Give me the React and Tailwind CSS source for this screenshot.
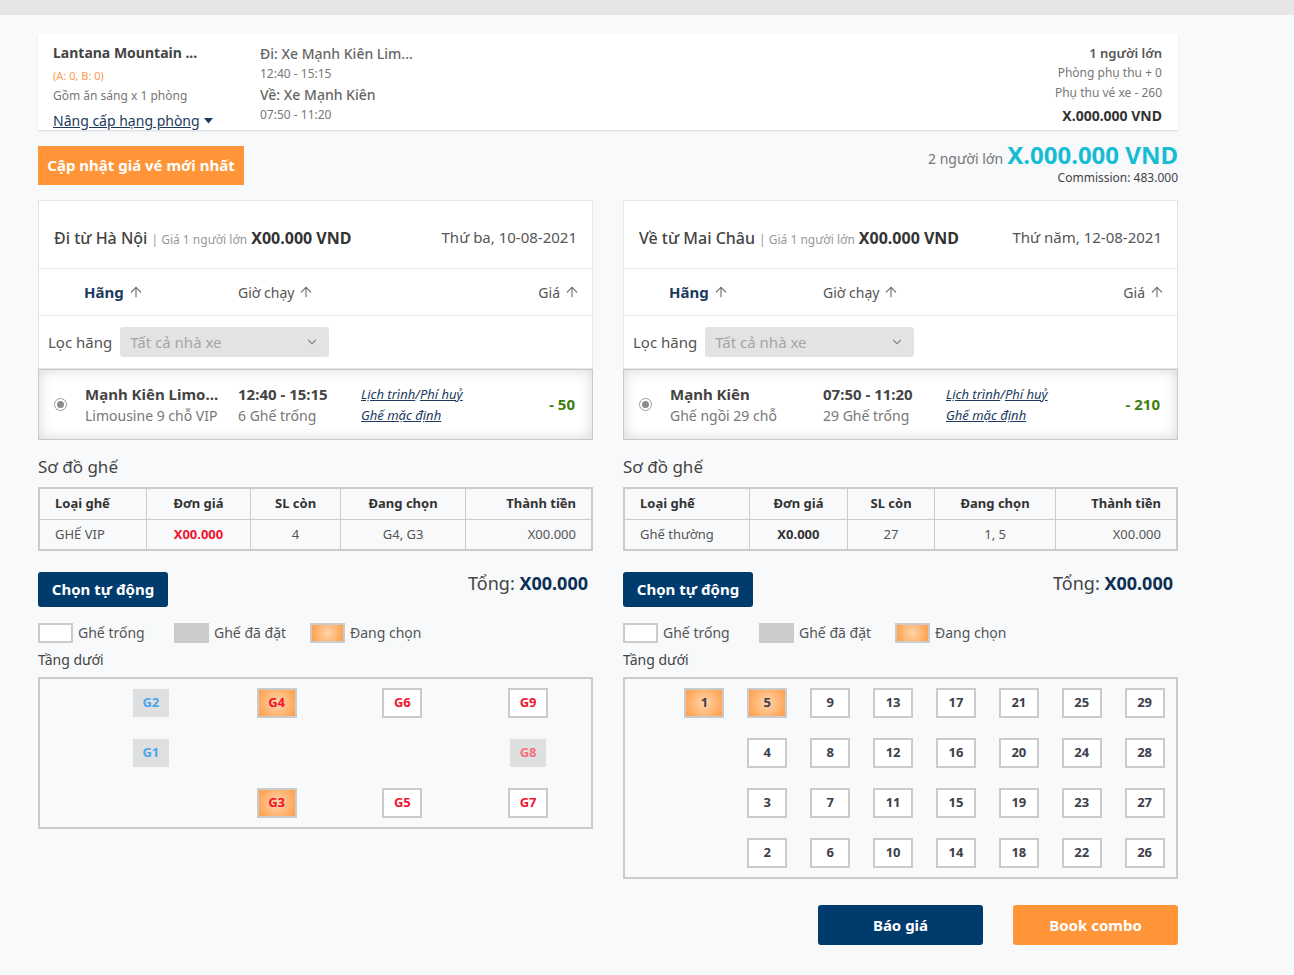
import { ArrowUp, ChevronDown } from 'lucide-react';

const leftSeats = [
  [{ l: 'G2', k: 'booked' }, { l: 'G4', k: 'selected' }, { l: 'G6', k: 'free' }, { l: 'G9', k: 'free' }],
  [{ l: 'G1', k: 'booked' }, null, null, { l: 'G8', k: 'booked', pink: true }],
  [null, { l: 'G3', k: 'selected' }, { l: 'G5', k: 'free' }, { l: 'G7', k: 'free' }],
];

const rightSeats = [
  ['1', '5', '9', '13', '17', '21', '25', '29'],
  [null, '4', '8', '12', '16', '20', '24', '28'],
  [null, '3', '7', '11', '15', '19', '23', '27'],
  [null, '2', '6', '10', '14', '18', '22', '26'],
];
const rightSelected = ['1', '5'];

const Seat = ({ seat, red }) => {
  if (!seat) return <div className="h-[30px]" />;
  if (seat.k === 'booked') {
    return (
      <div className={seat.pink
        ? 'w-[36px] h-[28px] bg-[#dedfdf] flex items-center justify-center text-[13px] font-bold text-[#f47281]'
        : 'w-[36px] h-[28px] bg-[#dedfdf] flex items-center justify-center text-[13px] font-bold text-[#4aa6f0]'}>
        {seat.l}
      </div>
    );
  }
  const base = seat.k === 'selected'
    ? 'w-[40px] h-[30px] border-2 border-[#cbcbcb] bg-[radial-gradient(circle,#ffd4aa_0%,#ff9d47_100%)] flex items-center justify-center text-[13px] font-bold'
    : 'w-[40px] h-[30px] border-2 border-[#cbcbcb] bg-white flex items-center justify-center text-[13px] font-bold';
  return <div className={base + (red ? ' text-[#f0142f]' : ' text-[#3e3f4c]')}>{seat.l}</div>;
};

const SortHead = ({ label, active }) => (
  <span className={active ? 'flex items-center gap-[4px] font-bold text-[#1b3a5e]' : 'flex items-center gap-[4px] text-[#555]'}>
    {label}
    <ArrowUp size={16} strokeWidth={1.8} className="text-[#777]" />
  </span>
);

const Legend = () => (
  <div className="flex items-center mt-[15px] text-[14px] text-[#555]">
    <div className="w-[136px] flex items-center gap-[5px]">
      <span className="w-[35px] h-[20px] border-2 border-[#cbcbcb] bg-white" />
      Ghế trống
    </div>
    <div className="w-[136px] flex items-center gap-[5px]">
      <span className="w-[35px] h-[20px] bg-[#cbcbcb]" />
      Ghế đã đặt
    </div>
    <div className="flex items-center gap-[5px]">
      <span className="w-[35px] h-[20px] border-2 border-[#cbcbcb] bg-[radial-gradient(circle,#ffd4aa_0%,#ff9d47_100%)]" />
      Đang chọn
    </div>
  </div>
);

const TripColumn = ({ d }) => (
  <div className="w-[555px]">
    <div className="bg-white border border-[#e6e6e6]">
      {/* header */}
      <div className="h-[68px] pt-[6px] px-[15px] flex items-center justify-between border-b border-[#e6e6e6]">
        <div className="flex items-baseline text-[16px] text-[#444]">
          <span className="font-medium">{d.from}</span>
          <span className="text-[12px] text-[#999] mx-[4px]">| Giá 1 người lớn</span>
          <span className="font-bold text-[#333]">X00.000 VND</span>
        </div>
        <span className="text-[15px] text-[#555]">{d.date}</span>
      </div>
      {/* sort */}
      <div className="h-[47px] flex items-center text-[14px] border-b border-[#e6e6e6] pr-[12px]">
        <div className="w-[199px] pl-[45px] text-[15px]"><SortHead label="Hãng" active /></div>
        <div className="flex-1"><SortHead label="Giờ chạy" /></div>
        <SortHead label="Giá" />
      </div>
      {/* filter */}
      <div className="h-[52px] flex items-center pl-[9px]">
        <span className="text-[15px] text-[#555] mr-[8px]">Lọc hãng</span>
        <div className="w-[209px] h-[30px] bg-[#e3e3e3] rounded-[3px] flex items-center justify-between px-[10px] text-[15px] text-[#a5a5a5]">
          Tất cả nhà xe
          <ChevronDown size={14} strokeWidth={2} className="text-[#888]" />
        </div>
      </div>
    </div>
    {/* trip */}
    <div className="h-[71px] border border-[#c9c9c9] bg-white shadow-[inset_0_0_14px_rgba(0,0,0,0.16)] flex items-center pl-[15px] pr-[17px]">
      <span className="w-[13px] h-[13px] rounded-full border border-[#9a9a9a] bg-white flex items-center justify-center">
        <span className="w-[7px] h-[7px] rounded-full bg-[#8c8c8c]" />
      </span>
      <div className="w-[153px] ml-[18px] leading-[22px]">
        <div className="text-[15px] font-bold text-[#444] whitespace-nowrap">{d.bus}</div>
        <div className="text-[14px] text-[#777] whitespace-nowrap">{d.busType}</div>
      </div>
      <div className="w-[123px] leading-[22px]">
        <div className="text-[15px] font-bold text-[#444]">{d.time}</div>
        <div className="text-[14px] text-[#777]">{d.empty}</div>
      </div>
      <div className="flex-1 text-[13px] italic text-[#1b3a5e] leading-[21px]">
        <div><span className="underline">Lịch trình</span>/<span className="underline">Phí huỷ</span></div>
        <div className="underline">Ghế mặc định</div>
      </div>
      <span className="text-[15px] font-bold text-[#3f7d0e]">{d.price}</span>
    </div>

    <div className="mt-[15px] text-[17px] leading-[24px] text-[#444]">Sơ đồ ghế</div>

    <table className="mt-[8px] w-full border-collapse border-2 border-[#cbcbcb] text-[13px] text-[#555]">
      <thead>
        <tr className="h-[31px] text-[#333]">
          {d.cols.map((c, i) => (
            <th key={c} style={{ width: d.widths[i] }}
              className={i === 0 ? 'border border-[#cbcbcb] font-bold text-left pl-[15px]' : i === 4 ? 'border border-[#cbcbcb] font-bold text-right pr-[15px]' : 'border border-[#cbcbcb] font-bold text-center'}>
              {c}
            </th>
          ))}
        </tr>
      </thead>
      <tbody>
        <tr className="h-[31px]">
          <td className="border border-[#cbcbcb] text-left pl-[15px]">{d.seatType}</td>
          <td className={d.redPrice ? 'border border-[#cbcbcb] text-center font-bold text-[#f0142f]' : 'border border-[#cbcbcb] text-center font-bold text-[#333]'}>{d.unit}</td>
          <td className="border border-[#cbcbcb] text-center">{d.left}</td>
          <td className="border border-[#cbcbcb] text-center">{d.picked}</td>
          <td className="border border-[#cbcbcb] text-right pr-[15px]">X00.000</td>
        </tr>
      </tbody>
    </table>

    <div className="mt-[21px] flex items-start justify-between">
      <button className="h-[35px] w-[130px] bg-[#003b6e] rounded-[3px] text-white text-[15px] font-bold">Chọn tự động</button>
      <div className="text-[18px] text-[#444] leading-[22px] pr-[5px]">
        Tổng: <span className="font-bold text-[#0d2f55]">X00.000</span>
      </div>
    </div>

    <Legend />

    <div className="mt-[7px] text-[14px] leading-[20px] text-[#444]">Tầng dưới</div>

    <div className="mt-[7px] border-2 border-[#cbcbcb] py-[9px] pl-[48px]">
      {d.map}
    </div>
  </div>
);

export default function App() {
  const leftMap = (
    <div className="grid grid-cols-4 gap-y-[20px]">
      {leftSeats.flat().map((s, i) => (
        <div key={i} className="flex justify-center items-center h-[30px]">
          <Seat seat={s} red />
        </div>
      ))}
    </div>
  );
  const rightMap = (
    <div className="grid grid-cols-8 gap-y-[20px]">
      {rightSeats.flat().map((s, i) => (
        <div key={i} className="flex justify-center items-center h-[30px]">
          <Seat seat={s ? { l: s, k: rightSelected.includes(s) ? 'selected' : 'free' } : null} />
        </div>
      ))}
    </div>
  );

  const outbound = {
    from: 'Đi từ Hà Nội', date: 'Thứ ba, 10-08-2021', bus: 'Mạnh Kiên Limo...', busType: 'Limousine 9 chỗ VIP',
    time: '12:40 - 15:15', empty: '6 Ghế trống', price: '- 50',
    cols: ['Loại ghế', 'Đơn giá', 'SL còn', 'Đang chọn', 'Thành tiền'], widths: [108, 104, 91, 125, 127],
    seatType: 'GHẾ VIP', unit: 'X00.000', redPrice: true, left: '4', picked: 'G4, G3', map: leftMap,
  };
  const inbound = {
    from: 'Về từ Mai Châu', date: 'Thứ năm, 12-08-2021', bus: 'Mạnh Kiên', busType: 'Ghế ngồi 29 chỗ',
    time: '07:50 - 11:20', empty: '29 Ghế trống', price: '- 210',
    cols: ['Loại ghế', 'Đơn giá', 'SL còn', 'Đang chọn', 'Thành tiền'], widths: [126, 98, 88, 121, 122],
    seatType: 'Ghế thường', unit: 'X0.000', redPrice: false, left: '27', picked: '1, 5', map: rightMap,
  };

  return (
    <div className="min-h-screen bg-[#f8f9fb] font-['Noto_Sans',sans-serif]">
      <div className="h-[15px] bg-[#e6e6e6]" />
      <div className="ml-[38px] w-[1140px] pt-[19px] pb-[30px]">
        {/* Summary */}
        <div className="h-[96px] bg-white shadow-[0_1px_2px_rgba(0,0,0,0.12)] pt-[9px] pl-[15px] pr-[16px] flex">
          <div className="w-[207px]">
            <div className="text-[14px] leading-[20px] font-bold text-[#444]">Lantana Mountain ...</div>
            <div className="mt-[3px] text-[11px] leading-[20px] text-[#ff9a50]">(A: 0, B: 0)</div>
            <div className="text-[12px] leading-[20px] text-[#777]">Gồm ăn sáng x 1 phòng</div>
            <div className="mt-[5px] text-[14px] leading-[20px] text-[#1b3a5e] flex items-center gap-[4px]">
              <span className="underline">Nâng cấp hạng phòng</span>
              <svg width="9" height="6" viewBox="0 0 9 6"><path d="M0 0h9L4.5 5.5z" fill="#1b3a5e" /></svg>
            </div>
          </div>
          <div className="flex-1 pt-[1px]">
            <div className="text-[14px] leading-[20px] font-medium text-[#666]">Đi: Xe Mạnh Kiên Lim...</div>
            <div className="text-[12px] leading-[19px] text-[#777]">12:40 - 15:15</div>
            <div className="mt-[2px] text-[14px] leading-[20px] font-medium text-[#666]">Về: Xe Mạnh Kiên</div>
            <div className="text-[12px] leading-[19px] text-[#777]">07:50 - 11:20</div>
          </div>
          <div className="text-right">
            <div className="text-[13px] leading-[20px] font-semibold text-[#555]">1 người lớn</div>
            <div className="text-[12px] leading-[20px] text-[#777]">Phòng phụ thu + 0</div>
            <div className="text-[12px] leading-[20px] text-[#777]">Phụ thu vé xe - 260</div>
            <div className="mt-[3px] text-[14px] leading-[20px] font-bold text-[#333]">X.000.000 VND</div>
          </div>
        </div>

        {/* Update + total */}
        <div className="mt-[16px] h-[39px] flex items-start justify-between">
          <button className="h-[39px] w-[206px] bg-[#ff9538] text-white text-[15px] font-bold">Cập nhật giá vé mới nhất</button>
          <div className="text-right -mt-[9px]">
            <div className="flex items-baseline justify-end gap-[4px]">
              <span className="text-[14px] text-[#777]">2 người lớn</span>
              <span className="text-[24px] font-bold text-[#16bcd4]">X.000.000 VND</span>
            </div>
            <div className="-mt-[4px] text-[12px] text-[#444]">Commission: 483.000</div>
          </div>
        </div>

        <div className="mt-[15px] flex gap-[30px] items-start">
          <TripColumn d={outbound} />
          <TripColumn d={inbound} />
        </div>

        <div className="mt-[26px] flex justify-end gap-[30px]">
          <button className="w-[165px] h-[40px] bg-[#003b6e] rounded-[3px] text-white text-[15px] font-bold">Báo giá</button>
          <button className="w-[165px] h-[40px] bg-[#ff9538] rounded-[3px] text-white text-[15px] font-bold">Book combo</button>
        </div>
      </div>
    </div>
  );
}
